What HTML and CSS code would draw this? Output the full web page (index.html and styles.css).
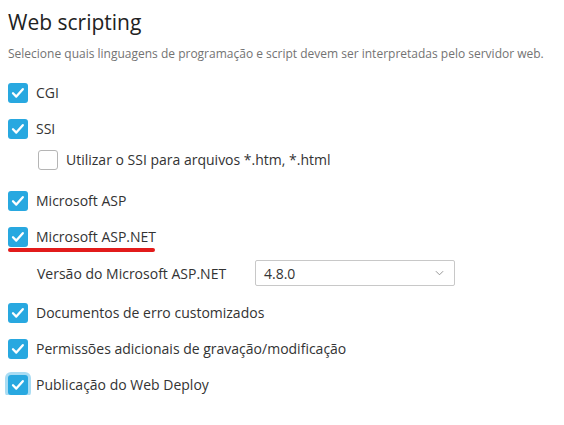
FILE: index.html
```html
<!DOCTYPE html>
<html lang="pt">
<head>
<meta charset="utf-8">
<link rel="stylesheet" href="styles.css">
</head>
<body>
<section class="panel">
  <h1 class="title">Web scripting</h1>
  <p class="desc">Selecione quais linguagens de programação e script devem ser interpretadas pelo servidor web.</p>
  <div class="list">
    <label class="row r-cgi"><span class="cb on"><svg viewBox="0 0 20 20"><path d="M5 10.3l3.3 3.3 6.5-7.4"/></svg></span><span class="txt">CGI</span></label>
    <label class="row r-ssi"><span class="cb on"><svg viewBox="0 0 20 20"><path d="M5 10.3l3.3 3.3 6.5-7.4"/></svg></span><span class="txt">SSI</span></label>
    <label class="row sub"><span class="cb off"></span><span class="txt">Utilizar o SSI para arquivos *.htm, *.html</span></label>
    <label class="row r-asp"><span class="cb on"><svg viewBox="0 0 20 20"><path d="M5 10.3l3.3 3.3 6.5-7.4"/></svg></span><span class="txt">Microsoft ASP</span></label>
    <label class="row r-net"><span class="cb on"><svg viewBox="0 0 20 20"><path d="M5 10.3l3.3 3.3 6.5-7.4"/></svg></span><span class="txt">Microsoft ASP.NET</span><span class="underline"></span></label>
    <div class="field">
      <span class="flabel">Versão do Microsoft ASP.NET</span>
      <div class="select"><span>4.8.0</span><svg viewBox="0 0 10 6"><path d="M1 1l4 4 4-4"/></svg></div>
    </div>
    <label class="row r-doc"><span class="cb on"><svg viewBox="0 0 20 20"><path d="M5 10.3l3.3 3.3 6.5-7.4"/></svg></span><span class="txt">Documentos de erro customizados</span></label>
    <label class="row r-perm"><span class="cb on"><svg viewBox="0 0 20 20"><path d="M5 10.3l3.3 3.3 6.5-7.4"/></svg></span><span class="txt">Permissões adicionais de gravação/modificação</span></label>
    <label class="row r-pub"><span class="cb on focus"><svg viewBox="0 0 20 20"><path d="M5 10.3l3.3 3.3 6.5-7.4"/></svg></span><span class="txt">Publicação do Web Deploy</span></label>
  </div>
</section>
</body>
</html>
```
FILE: styles.css
```css
html, body { margin: 0; padding: 0; background: #fff; }
body { font-family: "Open Sans", "Noto Sans", sans-serif; color: #333; }
.panel { padding: 8px 8px 0 8px; }
.title { margin: 0; font-size: 21px; line-height: 28px; font-weight: 400; color: #222; }
.desc { margin: 10px 0 0 0; font-size: 12px; line-height: 16px; color: #737373; }
.list { display: flex; flex-direction: column; margin-top: 21px; }
.row { position: relative; display: flex; align-items: center; height: 20px; font-size: 14px; line-height: 20px; }
.r-ssi { margin-top: 16px; }
.sub { margin-top: 11px; padding-left: 30px; }
.r-asp { margin-top: 21px; }
.r-net { margin-top: 16px; }
.r-doc { margin-top: 17px; }
.r-perm { margin-top: 16px; }
.r-pub { margin-top: 16px; }
.cb { width: 20px; height: 20px; box-sizing: border-box; border-radius: 3px; flex: none; margin-right: 8px; display: flex; align-items: center; justify-content: center; }
.cb.on { background: #28a8e0; }
.cb.off { border: 1px solid #b5b5b5; background: #fff; }
.cb.focus { box-shadow: 0 0 0 3px #a9dcf3; }
.cb svg { width: 20px; height: 20px; }
.cb path { fill: none; stroke: #fff; stroke-width: 2.3; stroke-linecap: round; stroke-linejoin: round; }
.txt { white-space: nowrap; }
.underline { position: absolute; left: 0; top: 21px; width: 147px; height: 4px; border-radius: 2px; background: #e21b1b; }
.field { display: flex; align-items: center; margin-top: 13px; padding-left: 29px; height: 26px; font-size: 14px; }
.flabel { width: 218px; flex: none; }
.select { width: 200px; height: 26px; box-sizing: border-box; border: 1px solid #c8c8c8; border-radius: 2px; display: flex; align-items: center; justify-content: space-between; padding: 0 10px 0 8px; color: #333; }
.select svg { width: 9px; height: 6px; }
.select path { fill: none; stroke: #8a8a8a; stroke-width: 1; }
```
